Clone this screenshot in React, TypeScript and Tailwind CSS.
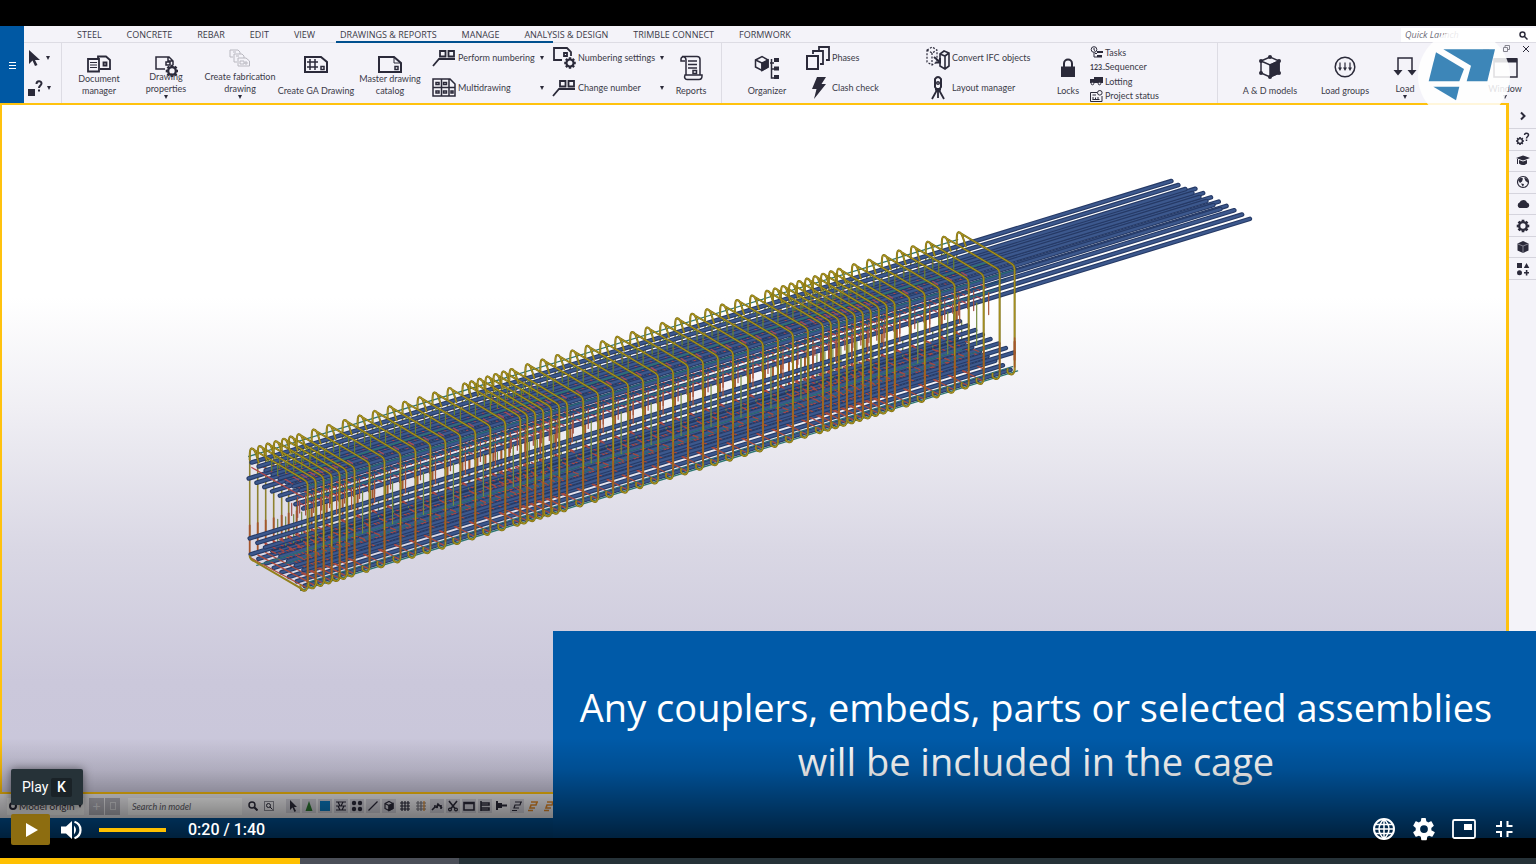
import type { ReactNode } from 'react'

const INK = '#2b2a3a'

interface IconProps {
  w?: number
  h?: number
  box?: string
  stroke?: number
  children: ReactNode
}

function Icon({ w = 24, h = 24, box, stroke = 1.5, children }: IconProps) {
  return (
    <svg
      width={w}
      height={h}
      viewBox={box ?? `0 0 ${w} ${h}`}
      fill="none"
      stroke={INK}
      strokeWidth={stroke}
      className="shrink-0"
      aria-hidden
    >
      {children}
    </svg>
  )
}

const gearTeeth = [0, 45, 90, 135, 180, 225, 270, 315]

function Gear({ x, y, r = 3, color = INK }: { x: number; y: number; r?: number; color?: string }) {
  return (
    <g transform={`translate(${x} ${y})`} stroke={color}>
      <circle r={r} strokeWidth={r * 0.6} fill="none" />
      {gearTeeth.map((a) => (
        <path key={a} d={`M0 ${-r * 1.1}V${-r * 1.65}`} strokeWidth={r * 0.7} transform={`rotate(${a})`} />
      ))}
    </g>
  )
}

/* ---------- ribbon icons ---------- */

const DocumentIcon = () => (
  <Icon w={24} h={18} stroke={1.8}>
    <path d="M11 4V1.500h8l4 3.500v9H13" />
    <path d="M1 4h11v12.500H1z" />
    <path d="M3 7.500h7M3 10h7M3 12.500h7" strokeWidth="1.200" />
    <path d="M16.500 7.500h3v3h-3z" />
  </Icon>
)
const DrawingPropsIcon = () => (
  <Icon w={24} h={22}>
    <path d="M11 14H2V2h13l4 4v4M14 2v4h5M12 7h4v3h-4z" />
    <Gear x={18} y={16} r={3.8} />
  </Icon>
)
const FabricationIcon = () => (
  <span className="-mt-1.5 block">
    <Icon w={22} h={18} stroke={1}>
      <g stroke="#b9b8c0">
        <path d="M4 8H1V1h8l2 2v2M4 3h3M8 13H5V5h8l2 2v2M7 7h3" />
        <path d="M9 9h8l3.500 3v5H9zM11 12h4v3h-4zM16 13h2v2h-2z" />
      </g>
    </Icon>
  </span>
)
const GaIcon = () => (
  <Icon w={26} h={19} stroke={2}>
    <path d="M2 2h16l6 5v10H2z" />
    <path d="M7 4v11M12 4v11M4 7h11M4 12h11" strokeWidth="1.500" />
    <path d="M18 11.500h3v3h-3z" strokeWidth="1.500" />
  </Icon>
)
const MasterIcon = () => (
  <Icon w={26} h={19} stroke={2}>
    <path d="M2 2h15l7 6v9H2z" />
    <path d="M17 2v6h7" strokeWidth="1" />
    <path d="M18 11.500h3v3h-3z" strokeWidth="1.500" />
  </Icon>
)
const NumberIcon = () => (
  <Icon>
    <path d="M1 20l6-7h16M8 5h5.500v5.500H8zM16.500 5H22v5.500h-5.500z" strokeWidth="1.800" />
  </Icon>
)
const MultiIcon = () => (
  <Icon>
    <path d="M1 3h17l5 5v12H1zM1 11.500h22M9.500 3v17M17 3v17" strokeWidth="1.500" />
    <path d="M4 6.500h3v2H4zM4 15h3v2H4zM11.500 6.500h3v2h-3zM11.500 15h3v2h-3zM19 15h2v2h-2z" />
  </Icon>
)
const NumberSettingsIcon = () => (
  <Icon>
    <path d="M10 14H2V2h13l4 4v4M12 7h3v3h-3z" strokeWidth="1.800" />
    <Gear x={18} y={17} r={3.5} />
  </Icon>
)
const ReportsIcon = () => (
  <Icon w={24} h={26}>
    <path d="M7 20V5c0-4-5-4-5-1v2h4M3 1.500h15c3 0 3 2 3 3V20" />
    <path d="M6 20h17v1c0 3-2 3.500-3 3.500H8c-2 0-3-2-2-4.500zM9 6h9M9 9.500h9M9 13h9" />
    <path d="M14 15.500h3.500v3H14z" />
  </Icon>
)
const OrganizerIcon = () => (
  <Icon w={26} h={26}>
    <path d="M1.500 5L8 1.500 14 5v7l-6 3.500L1.500 12z" />
    <path d="M8 8l6-3v7l-6 3.500z" fill={INK} />
    <path d="M1.500 5L8 8v7M16 8h4M17.500 4v19h3M17.500 14H21" />
    <path d="M20 3h5v4h-5zM20 11.500h5v4h-5zM20 20h5v4h-5z" fill={INK} stroke="none" />
  </Icon>
)
const PhasesIcon = () => (
  <Icon>
    <path d="M1 10h11v13H1z" strokeWidth="2" />
    <path d="M7 8V5h10v13h-3M13 4V1h10v13h-3" strokeWidth="1.800" />
  </Icon>
)
const ClashIcon = () => (
  <Icon>
    <path d="M11 1h9l-4.500 7H20L8 23l2.500-10H6z" fill={INK} stroke="none" />
  </Icon>
)
const ConvertIcon = () => (
  <Icon stroke={1.2}>
    <path d="M1 4l5-3 5 3v12l-5 3-5-3zM1 4l5 3 5-3M6 7v12" strokeDasharray="2 1.500" />
    <path d="M14 8l4-3 5 2v13l-4 3-5-3zM14 8l5 2 4-3M19 10v13" strokeWidth="1.600" />
    <path d="M8 11l6 5M14 12v4.500H9.500" strokeWidth="2" />
  </Icon>
)
const LayoutIcon = () => (
  <Icon>
    <path d="M9 3q3-4 6 0v8l-1.500 2h-3L9 11z" strokeWidth="2" />
    <circle cx="12" cy="7" r="1.300" />
    <path d="M9 13.500h6M11 14L6 23M13 14l5 9M12 14v8" strokeWidth="1.800" />
  </Icon>
)
const LockIcon = () => (
  <Icon w={16} h={22}>
    <path d="M4 12V8.500a4 4 0 018 0V12" strokeWidth="2" />
    <path d="M1 11.500h14V22H1z" fill={INK} stroke="none" />
  </Icon>
)
const TasksIcon = () => (
  <Icon w={13} h={12} stroke={1}>
    <circle cx="4" cy="3.500" r="2.800" />
    <path d="M4 2v2l1 .500M4 6.500V11h3M5 7.500h2" />
    <path d="M7 5h6v2H7zM7 9h5v2.500H7z" fill={INK} stroke="none" />
  </Icon>
)
const LottingIcon = () => (
  <Icon w={13} h={12} stroke={1}>
    <path d="M4 2h9v6H4zM0 4h4v4H0z" fill={INK} stroke="none" />
    <circle cx="2.500" cy="8.500" r="1.300" fill="#f4f3f9" />
    <circle cx="9.500" cy="8.500" r="1.300" fill="#f4f3f9" />
  </Icon>
)
const StatusIcon = () => (
  <Icon w={13} h={12} stroke={1}>
    <path d="M7 2.500H.5v9h11.500V6M2.500 5H6M2.500 9.500h7M3 7v2.500M5.500 7.500v2M8 7v2.500" />
    <circle cx="9.800" cy="2.800" r="2.300" />
  </Icon>
)
const ModelsIcon = () => (
  <Icon w={24} h={24}>
    <path d="M3 6l9-4 9 4v12l-9 4-9-4zM3 6l9 4 9-4" />
    <path d="M12 10l9-4v12l-9 4z" fill={INK} />
    <g fill={INK} stroke="none">
      <circle cx="3" cy="6" r="2" />
      <circle cx="12" cy="2" r="2" />
      <circle cx="21" cy="6" r="2" />
      <circle cx="3" cy="18" r="2" />
      <circle cx="21" cy="18" r="2" />
      <circle cx="12" cy="22" r="2" />
    </g>
  </Icon>
)
const LoadGroupsIcon = () => (
  <Icon w={22} h={24}>
    <circle cx="11" cy="12" r="9.800" />
    <path d="M6 7.500v6M11 7.500v6M16 7.500v6" strokeWidth="1.200" />
    <path d="M4 12.500h4l-2 3.500zM9 12.500h4L11 16zM14 12.500h4L16 16z" fill={INK} stroke="none" />
  </Icon>
)
const LoadIcon = () => (
  <Icon w={24} h={23}>
    <path d="M5 17V3h14v14" />
    <path d="M.5 15h9L5 20.500zM14.500 15h9L19 20.500z" fill={INK} stroke="none" />
  </Icon>
)
const WindowIcon = () => (
  <Icon w={25} h={24}>
    <path d="M1 4h23v18H1z" />
    <path d="M1 3h23v4.500H1z" fill={INK} stroke="none" />
  </Icon>
)

/* ---------- ribbon parts ---------- */

const Caret = () => <span className="h-0 w-0 border-x-2 border-t-4 border-x-transparent border-t-[#2b2a3a]" />

interface BigButtonProps {
  icon: ReactNode
  lines: string[]
  width: string
  caret?: boolean
}

function BigButton({ icon, lines, width, caret }: BigButtonProps) {
  return (
    <button
      type="button"
      className={`flex h-full shrink-0 flex-col items-center justify-between whitespace-nowrap pt-3 leading-3 ${width} ${caret ? 'pb-1' : 'pb-1.5'}`}
    >
      <span className="flex h-3 items-start">{icon}</span>
      <span className="flex flex-col items-center">
        {lines.map((line) => (
          <span key={line}>{line}</span>
        ))}
        {caret ? <Caret /> : null}
      </span>
    </button>
  )
}

function RowButton({ icon, label, caret }: { icon: ReactNode; label: string; caret?: boolean }) {
  return (
    <button type="button" className="flex h-[30px] w-full items-center gap-0.5 whitespace-nowrap pr-2 text-left">
      {icon}
      <span className="grow">{label}</span>
      {caret ? <Caret /> : null}
    </button>
  )
}

function SmallButton({ icon, label }: { icon: ReactNode; label: string }) {
  return (
    <button type="button" className="flex h-[15px] items-center gap-0.5 whitespace-nowrap text-left">
      {icon}
      {label}
    </button>
  )
}

const tabs = [
  'STEEL',
  'CONCRETE',
  'REBAR',
  'EDIT',
  'VIEW',
  'DRAWINGS & REPORTS',
  'MANAGE',
  'ANALYSIS & DESIGN',
  'TRIMBLE CONNECT',
  'FORMWORK',
]

function TabRow() {
  return (
    <nav className="flex h-[17px] items-end border-b border-[#dddce4] pl-[53px] font-['Open_Sans',sans-serif] text-[9px]">
      <div className="flex gap-[25px]">
        {tabs.map((tab) => (
          <button key={tab} type="button" className="relative h-[15px] whitespace-nowrap">
            {tab}
            {tab === 'DRAWINGS & REPORTS' ? (
              <span className="absolute -bottom-px -left-1 h-0.5 w-[217px] bg-[#00508f]" />
            ) : null}
          </button>
        ))}
      </div>
      <label className="ml-auto flex h-3.5 w-[135px] items-center bg-white pl-1 pr-2">
        <input
          type="text"
          aria-label="Quick Launch"
          placeholder="Quick Launch"
          className="w-full bg-transparent italic outline-none placeholder:text-[#6d6c78]"
        />
        <Icon w={9} h={9}>
          <circle cx="3.500" cy="3.500" r="2.500" />
          <path d="M5.500 5.500l3 3" />
        </Icon>
      </label>
    </nav>
  )
}

function Ribbon() {
  return (
    <header className="relative flex h-[77px] shrink-0 bg-[#f4f3f9] font-[Lato,sans-serif] text-[9px] text-[#3b3a48]">
      <button type="button" aria-label="Menu" className="flex w-6 shrink-0 items-center justify-center bg-[#0058a3]">
        <svg width="8" height="8" stroke="#fff" aria-hidden>
          <path d="M1 1.500h7M1 4.500h7M1 7.500h7" />
        </svg>
      </button>
      <div className="flex min-w-0 grow flex-col">
        <TabRow />
        <div className="flex h-[60px]">
          <div className="flex w-[38px] shrink-0 flex-col border-r border-[#dddce4]">
            <button type="button" aria-label="Select" className="flex h-[30px] items-center gap-1.5 pl-1">
              <Icon w={12} h={16}>
                <path d="M1 0v14l3.500-3.500L7 16l2.500-1-2.500-5h5z" fill={INK} stroke="none" />
              </Icon>
              <Caret />
            </button>
            <button type="button" aria-label="Inquire" className="flex h-[30px] items-center gap-1 pl-1">
              <Icon w={15} h={16}>
                <path d="M0 9h7v7H0z" fill={INK} stroke="none" />
                <path d="M8.500 4c0-3.500 5-3.500 5-.5 0 2-2.500 2-2.500 4.500M11 9.500v2" strokeWidth="2" />
              </Icon>
              <Caret />
            </button>
          </div>
          <BigButton icon={<DocumentIcon />} lines={['Document', 'manager']} width="w-[74px]" />
          <BigButton icon={<DrawingPropsIcon />} lines={['Drawing', 'properties']} width="w-[60px]" caret />
          <BigButton icon={<FabricationIcon />} lines={['Create fabrication', 'drawing']} width="w-[88px]" caret />
          <BigButton icon={<GaIcon />} lines={['Create GA Drawing']} width="w-[64px]" />
          <BigButton icon={<MasterIcon />} lines={['Master drawing', 'catalog']} width="w-[84px]" />
          <div className="w-[120px] shrink-0">
            <RowButton icon={<NumberIcon />} label="Perform numbering" caret />
            <RowButton icon={<MultiIcon />} label="Multidrawing" caret />
          </div>
          <div className="w-[120px] shrink-0">
            <RowButton icon={<NumberSettingsIcon />} label="Numbering settings" caret />
            <RowButton icon={<NumberIcon />} label="Change number" caret />
          </div>
          <BigButton icon={<ReportsIcon />} lines={['Reports']} width="w-[38px]" />
          <div className="ml-[11px] flex shrink-0 border-l border-[#dddce4] pl-1.5">
            <BigButton icon={<OrganizerIcon />} lines={['Organizer']} width="w-[78px]" />
          </div>
          <div className="w-[120px] shrink-0">
            <RowButton icon={<PhasesIcon />} label="Phases" />
            <RowButton icon={<ClashIcon />} label="Clash check" />
          </div>
          <div className="w-[120px] shrink-0">
            <RowButton icon={<ConvertIcon />} label="Convert IFC objects" />
            <RowButton icon={<LayoutIcon />} label="Layout manager" />
          </div>
          <BigButton icon={<LockIcon />} lines={['Locks']} width="w-[44px]" />
          <div className="flex w-[128px] shrink-0 flex-col border-r border-[#dddce4] pt-0.5">
            <SmallButton icon={<TasksIcon />} label="Tasks" />
            <SmallButton
              icon={<span className="w-[13px] text-[7px] font-bold">123..</span>}
              label="Sequencer"
            />
            <SmallButton icon={<LottingIcon />} label="Lotting" />
            <SmallButton icon={<StatusIcon />} label="Project status" />
          </div>
          <BigButton icon={<ModelsIcon />} lines={['A & D models']} width="w-[104px]" />
          <BigButton icon={<LoadGroupsIcon />} lines={['Load groups']} width="w-[46px]" />
          <BigButton icon={<LoadIcon />} lines={['Load']} width="w-[74px]" caret />
          <div className="ml-auto flex">
            <BigButton icon={<WindowIcon />} lines={['Window']} width="w-[62px]" caret />
          </div>
        </div>
      </div>
      <div className="absolute right-1.5 top-[19px] flex gap-3">
        <button type="button" aria-label="Minimize">
          <Icon w={8} h={8} stroke={1}>
            <path d="M1 4.500h6" />
          </Icon>
        </button>
        <button type="button" aria-label="Restore">
          <Icon w={8} h={8} stroke={1}>
            <path d="M1.500 2.500h4v4h-4zM3 2.500v-2h4.500v4H6" stroke="#85848e" />
          </Icon>
        </button>
        <button type="button" aria-label="Close">
          <Icon w={8} h={8} stroke={1}>
            <path d="M1 1l6 6M7 1L1 7" />
          </Icon>
        </button>
      </div>
    </header>
  )
}

/* ---------- side bar ---------- */

const sideTools: { label: string; icon: ReactNode }[] = [
  {
    label: 'Help on settings',
    icon: (
      <>
        <Gear x={4} y={9} r={2.4} />
        <path d="M8.500 3c0-2.500 4-2.500 4 0 0 1.500-2 1.500-2 3.500M10.500 7.500v1.500" strokeWidth="1.500" />
      </>
    ),
  },
  {
    label: 'Learning',
    icon: (
      <g fill={INK} stroke="none">
        <path d="M7 1.500L14 4 7 6.500 0 4zM3 6l4 1.500L11 6v3.500q-4 3-8 0zM1 5h1v5H1z" />
      </g>
    ),
  },
  {
    label: 'Online',
    icon: (
      <>
        <circle cx="7" cy="7" r="5.500" strokeWidth="1.200" />
        <path d="M2 5l3-2.500 2 1-1 3-2 1.500zM8 2.500l3.500 1.500 1 4-3-2zM5 8.500l3 .5-1 3z" fill={INK} stroke="none" />
      </>
    ),
  },
  {
    label: 'Cloud',
    icon: <path d="M3.500 11a3 3 0 010-5.500 4 4 0 017.500 0 2.800 2.800 0 010 5.500z" fill={INK} stroke="none" />,
  },
  { label: 'Settings', icon: <Gear x={7} y={7} r={3.8} /> },
  {
    label: 'Components',
    icon: (
      <>
        <path d="M1.500 3.500L7 1l5.500 2.500v7L7 13l-5.500-2.500z" fill={INK} stroke="none" />
        <path d="M2 4l5 2 5-2M7 6v7" stroke="#9a99a6" strokeWidth=".800" />
      </>
    ),
  },
  {
    label: 'Shapes',
    icon: (
      <g fill={INK} stroke="none">
        <path d="M1 1h5v5H1zM10.500 1l2.800 5H7.800zM9.800 8h1.600v2H13v1.600h-1.600v2H9.800v-2H8V10h1.800z" />
        <circle cx="3.500" cy="10.700" r="2.500" />
      </g>
    ),
  },
]

function SideBar() {
  return (
    <aside className="flex w-[27px] shrink-0 flex-col bg-[#f4f3f9]">
      <button type="button" aria-label="Collapse" className="flex h-[26px] items-center justify-center border-b border-[#d5d4dd]">
        <Icon w={8} h={10}>
          <path d="M2 1.500L5.500 5 2 8.500" strokeWidth="2" />
        </Icon>
      </button>
      <div className="grid h-[151px] auto-rows-fr">
        {sideTools.map((tool) => (
          <button
            key={tool.label}
            type="button"
            aria-label={tool.label}
            className="flex items-center justify-center border-b border-[#d5d4dd]"
          >
            <Icon w={14} h={14}>
              {tool.icon}
            </Icon>
          </button>
        ))}
      </div>
    </aside>
  )
}

/* ---------- rebar cage ---------- */

// stirrup positions along the beam, with the denser zones near start, third points
const stirrupX = [
  307, 315, 323, 331, 339, 346, 354, 369, 384, 400, 415, 430, 445, 460, 475, 490, 505, 520, 527, 535, 543, 551, 559,
  567, 583, 598, 613, 628, 643, 658, 673, 688, 703, 718, 733, 748, 763, 778, 793, 808, 823, 831, 839, 847, 855, 863,
  871, 879, 887, 895, 910, 925, 940, 955, 969, 984, 1000, 1015,
]
const SLOPE = 0.306
const stirrups = stirrupX.map((x) => ({ x, dy: -(x - 307) * SLOPE }))
const innerTies = stirrups.filter(({ x }) => x < 990)
const eight = [0, 1, 2, 3, 4, 5, 6, 7]

const STIRRUP =
  'M-49 463C-51 458 -52 449 -56 449C-58 449 -58 454 -58 460M-56 449L-4 480Q0 482 0 486V587Q-1 593 -5 591Q-8 590 -7 586'

function Bar({ x, y, length }: { x: number; y: number; length: number }) {
  const d = `M${x} ${y}l${length} ${-length * SLOPE}`
  return (
    <>
      <path d={d} stroke="#263a66" strokeWidth="4.600" />
      <path d={d} stroke="#3c588d" strokeWidth="2.400" />
    </>
  )
}

function Thin({ x, y, length, color }: { x: number; y: number; length: number; color: string }) {
  return <path d={`M${x} ${y}l${length} ${-length * SLOPE}`} stroke={color} strokeWidth="1.300" />
}

function Cage() {
  return (
    <svg
      viewBox="2 105 1504 688"
      className="block h-full w-full"
      fill="none"
      strokeLinecap="round"
      role="img"
      aria-label="Rebar cage model"
    >
      {/* far side legs */}
      {stirrups.map(({ x, dy }) => (
        <g key={x} transform={`translate(${x} ${dy})`}>
          <path d="M-58 460V540" stroke="#8f8230" strokeWidth="1.600" />
          <path d="M-58 526V556" stroke="#a5562c" strokeWidth="1.800" />
        </g>
      ))}
      {/* bottom mat */}
      {eight.map((i) => (
        <Bar key={i} x={250 + i * 7.7} y={555 + i * 4.5} length={707} />
      ))}
      {innerTies.map(({ x, dy }) => (
        <g key={x} transform={`translate(${x} ${dy})`} strokeWidth="1.200">
          <path d="M-58 558L-2 588" stroke="#b04a3a" />
          <path d="M-46 542L0 566" stroke="#b8423f" />
          <path d="M-30 520v24M-22 528v20" stroke="#6f8640" />
        </g>
      ))}
      {eight.map((i) => (
        <Bar key={i} x={249 + i * 7.7} y={539 + i * 4.5} length={711} />
      ))}
      <Thin x={256} y={566} length={706} color="#2e7076" />
      <Thin x={270} y={552} length={706} color="#20375f" />
      <Thin x={285} y={564} length={706} color="#2e6a76" />
      {/* marks of the inner ties on the bottom mat */}
      {innerTies.map(({ x, dy }) => (
        <g key={x} transform={`translate(${x} ${dy})`} strokeWidth="1.300" stroke="#a8483f">
          <path d="M-28 540l4 2M-18 549l4 2M-10 557l5 2M-36 552l4 2M-6 574l5 2" />
        </g>
      ))}
      {/* top mat */}
      {eight.map((i) => (
        <Bar key={i} x={248 + i * 7.8} y={479 + i * 4.3} length={948} />
      ))}
      {innerTies.map(({ x, dy }) => (
        <g key={x} transform={`translate(${x} ${dy})`} strokeWidth="1.200">
          <path d="M-56 468L-4 498" stroke="#b2474a" />
          <path d="M-10 498v20M-16 504v12" stroke="#a04f45" />
        </g>
      ))}
      {eight.map((i) => (
        <Bar key={i} x={251 + i * 7} y={463 + i * 4} length={921} />
      ))}
      <Thin x={248} y={457} length={710} color="#2c7570" />
      <Thin x={290} y={476} length={700} color="#2c7570" />
      <Thin x={306} y={487} length={709} color="#2a6f7a" />
      <Thin x={306} y={494} length={700} color="#1f4d70" />
      <Thin x={306} y={501} length={690} color="#2a6f7a" />
      {/* inner ties */}
      {innerTies.map(({ x, dy }, i) => (
        <g key={x} transform={`translate(${x} ${dy})`} strokeWidth="1.200">
          <path d="M-40 462q2-4 4 0v9M-30 464v12" stroke="#68802f" />
          <path d="M-3 492l5 3M-7 504l4 2M-22 480l5 3" stroke="#b04a52" />
          {i % 2 === 0 ? <path d="M8 506v42" stroke="#748a3c" /> : <path d="M5 500v22" stroke="#a8563a" />}
        </g>
      ))}
      <Thin x={300} y={591} length={718} color="#2c7570" />
      <Thin x={307} y={583} length={706} color="#2c6a7a" />
      {/* closed stirrups */}
      {stirrups.map(({ x, dy }) => (
        <g key={x} transform={`translate(${x} ${dy})`} strokeLinejoin="round">
          <path d={STIRRUP} stroke="#7c6d12" strokeWidth="2" />
          <path d={STIRRUP} stroke="#ab9520" strokeWidth="1" />
          <path d="M0 555V584" stroke="#a85a24" strokeWidth="1.400" />
        </g>
      ))}
      <path d="M249 557Q250 561 254 562L302 590" stroke="#93801c" strokeWidth="2" />
      <path d="M1015 342v18" stroke="#a5562c" strokeWidth="2" />
    </svg>
  )
}

/* ---------- status bar ---------- */

const statusTools: { label: string; on?: boolean; icon: ReactNode }[] = [
  { label: 'Select all', on: true, icon: <path d="M3 0v10l2.500-2.500L7.500 12l1.500-1-2-4h3z" fill={INK} stroke="none" /> },
  { label: 'Select cones', on: true, icon: <path d="M6 1l3.500 10h-7z" fill="#2d7a32" stroke="none" /> },
  { label: 'Select parts', on: true, icon: <path d="M1 1h10v10H1z" fill="#0b7cc4" stroke="none" /> },
  { label: 'Select surfaces', on: true, icon: <path d="M1 2h10M1 6h10M1 10h10M3 2l2 4M8 2L6 6M3 6l2 4M9 6l-2 4" /> },
  {
    label: 'Select points',
    on: true,
    icon: (
      <g fill={INK} stroke="none">
        <circle cx="3" cy="3" r="2.200" />
        <circle cx="9" cy="3" r="2.200" />
        <circle cx="3" cy="9" r="2.200" />
        <circle cx="9" cy="9" r="2.200" />
      </g>
    ),
  },
  { label: 'Select lines', on: true, icon: <path d="M1.500 10.500l9-9" /> },
  {
    label: 'Select solids',
    on: true,
    icon: (
      <>
        <path d="M2 3.500L6 1.500l4 2v5l-4 2-4-2zM2 3.500l4 2 4-2M6 5.500v5" />
        <path d="M6 5.500l4-2v5l-4 2z" fill={INK} />
      </>
    ),
  },
  { label: 'Select grids', icon: <path d="M3 1v10M6 1v10M9 1v10M1 3h10M1 6h10M1 9h10" /> },
  {
    label: 'Select grid lines',
    icon: (
      <>
        <path d="M3 1v10M1 3h10M1 6h10M1 9h10M6 1v10" stroke="#77767f" />
        <path d="M9 1v10" stroke="#e08a2c" />
      </>
    ),
  },
  {
    label: 'Select welds',
    on: true,
    icon: <path d="M1 10l3-3M3 6h2M5 8l2-4 4 4M7 4l-1 4M10 5v4" strokeWidth="1.600" />,
  },
  {
    label: 'Select cuts',
    on: true,
    icon: (
      <>
        <path d="M2 1l6 7.500M10 1L4 8.500" strokeWidth="1.600" />
        <circle cx="3" cy="9.500" r="1.400" />
        <circle cx="9" cy="9.500" r="1.400" />
      </>
    ),
  },
  { label: 'Select views', on: true, icon: <path d="M1 2.500h10v7.500H1zM1 3.500h10" strokeWidth="1.600" /> },
  { label: 'Select bolts', on: true, icon: <path d="M2 1v10M2 3h8v2H2M2 8h8v2H2" strokeWidth="1.600" /> },
  {
    label: 'Select single bolts',
    icon: <path d="M1 1h2v9H1zM3 3h4v5H3zM7 4.500h5v2H7z" fill={INK} stroke="none" />,
  },
  { label: 'Select rebar', on: true, icon: <path d="M4 2h7M10 2L9 5H4L3 8h5M1 10.500h5" /> },
  { label: 'Select rebar groups', icon: <path d="M4 2h7M10 2L9 5H4L3 8h5M1 10.500h5" stroke="#e08a2c" strokeWidth="1.600" /> },
  { label: 'Select rebar sets', icon: <path d="M4 2h7M10 2L9 5H4L3 8h5M1 10.500h5" stroke="#e08a2c" strokeWidth="1.600" /> },
]

function StatusBar() {
  return (
    <div className="flex h-6 shrink-0 items-center bg-[#f0eff3] pl-[7px] font-[Lato,sans-serif] text-[9px] text-[#3b3a48]">
      <label className="flex h-[17px] w-[77px] items-center gap-0.5 bg-white px-0.5">
        <span className="h-2 w-2 shrink-0 rounded-full border-2 border-[#2b2a3a]" />
        <select aria-label="Work plane" className="min-w-0 grow appearance-none text-[10px]">
          <option>Model origin</option>
        </select>
        <Caret />
      </label>
      <div className="ml-[5px] flex gap-px text-[14px] leading-4 text-white/60">
        <button type="button" aria-label="Add work plane" className="h-[17px] w-[15px] bg-[#b5b4bd]">
          +
        </button>
        <button type="button" aria-label="Delete work plane" className="flex h-[17px] w-[15px] items-center justify-center bg-[#b5b4bd]">
          <span className="h-2 w-1.5 border border-white/50" />
        </button>
      </div>
      <input
        type="text"
        aria-label="Search in model"
        placeholder="Search in model"
        className="ml-2 h-[17px] w-[114px] bg-white pl-1 italic outline-none placeholder:text-[#5d5c66]"
      />
      <button type="button" aria-label="Search" className="ml-1.5">
        <Icon w={10} h={10}>
          <circle cx="4" cy="4" r="3" />
          <path d="M6.500 6.500L9.500 9.500" strokeWidth="2" />
        </Icon>
      </button>
      <button type="button" aria-label="Search in selection" className="ml-1.5">
        <Icon w={10} h={10} stroke={1}>
          <path d="M.5.500h9v9h-9z" strokeDasharray="1 1" />
          <circle cx="4.500" cy="4.500" r="2" />
          <path d="M6 6l2.500 2.500" />
        </Icon>
      </button>
      <div className="ml-3 flex gap-0.5">
        {statusTools.map((tool) => (
          <button
            key={tool.label}
            type="button"
            aria-label={tool.label}
            className={`flex h-3.5 w-3.5 items-center justify-center ${tool.on ? 'bg-[#d4d3dc]' : ''}`}
          >
            <Icon w={12} h={12} stroke={1.2}>
              {tool.icon}
            </Icon>
          </button>
        ))}
      </div>
    </div>
  )
}

/* ---------- video overlays ---------- */

function Watermark() {
  return (
    <svg viewBox="0 0 276 276" className="absolute right-[26px] top-1 w-[92px]" aria-hidden>
      <circle cx="138" cy="138" r="138" fill="#fff" opacity=".850" />
      <g fill="#3d86b8">
        <path d="M54 67l84 50-14 37H32z" />
        <path d="M76 58h155l-23 96h-62l13-47z" />
        <path d="M46 170h78l-10 41z" />
      </g>
    </svg>
  )
}

function Caption() {
  return (
    <div className="absolute bottom-0 right-0 h-[207px] w-[64%] bg-[#005aa8] pr-[17px] pt-[49px] text-center font-['Open_Sans',sans-serif] text-[38px] leading-[54px] text-white">
      <p className="whitespace-nowrap">Any couplers, embeds, parts or selected assemblies</p>
      <p>will be included in the cage</p>
    </div>
  )
}

const player = { position: 19.53, buffered: 29.88 }

function PlayerControls() {
  return (
    <div className="absolute inset-x-0 bottom-0 flex h-[126px] flex-col justify-end bg-[linear-gradient(to_bottom,rgba(0,0,0,0)_0%,rgba(0,0,0,0.13)_25%,rgba(0,0,0,0.36)_50%,rgba(0,0,0,0.62)_78%,rgba(0,0,0,0.75)_100%)] font-['Roboto',sans-serif] text-white">
      <div className="flex h-[31px] items-center pl-[11px] pr-5">
        <div className="relative">
          <button type="button" aria-label="Play" className="flex h-[31px] w-[39px] items-center justify-center rounded-xs bg-[#8d6d10] pl-0.5">
            <svg width="14" height="16" fill="#fff" aria-hidden>
              <path d="M1 1l12 7-12 7z" />
            </svg>
          </button>
          <div
            role="tooltip"
            className="absolute bottom-10 left-0 flex h-9 w-[72px] items-center justify-between rounded-xs bg-[#263238] px-[11px] text-[14px] shadow-[0_0_10px_rgba(0,0,0,0.5)]"
          >
            Play
            <kbd className="flex h-[19px] w-[21px] items-center justify-center rounded-xs bg-[#1a2227] font-['Roboto',sans-serif] text-[14px] font-medium">
              K
            </kbd>
          </div>
        </div>
        <button type="button" aria-label="Mute" className="ml-[11px]">
          <svg width="21" height="20" viewBox="0 0 21 20" fill="#fff" aria-hidden>
            <path d="M0 6.500h5L11 1v18l-6-5.500H0z" />
            <path d="M13 5.500q4 4.500 0 9z" />
            <path d="M13.500 1.800q6 2 6 8.200t-6 8.200" fill="none" stroke="#fff" strokeWidth="2.200" />
          </svg>
        </button>
        <input
          type="range"
          aria-label="Volume"
          defaultValue={100}
          className="ml-[17px] h-1 w-[67px] appearance-none bg-[#ffc000] [&::-webkit-slider-thumb]:appearance-none"
        />
        <span className="ml-[22px] text-[16px] font-medium">0:20 / 1:40</span>
        <div className="ml-auto flex gap-4">
          <button type="button" aria-label="Language">
            <svg width="24" height="24" fill="none" stroke="#fff" strokeWidth="2" aria-hidden>
              <circle cx="12" cy="11" r="10" />
              <path d="M2 11h20M12 1v20M3.500 6.500h17M3.500 15.500h17M12 1q-10 10 0 20M12 1q10 10 0 20" strokeWidth="1.500" />
            </svg>
          </button>
          <button type="button" aria-label="Settings">
            <svg width="24" height="24" viewBox="-1 0 26 26" fill="#fff" aria-hidden>
              <path d="M19.900 13.200c.1-.4.100-.8.100-1.200s0-.8-.1-1.200l2.500-2c.2-.2.300-.5.200-.7l-2.400-4.200c-.1-.3-.5-.4-.7-.3l-3 1.200c-.6-.5-1.300-.9-2-1.200l-.5-3.100c0-.3-.3-.5-.6-.5H9.600c-.3 0-.5.200-.6.500l-.4 3.100c-.8.300-1.400.7-2.100 1.200l-3-1.200c-.3-.1-.6 0-.7.300L.4 8.100c-.1.300-.1.500.2.700l2.500 2c-.1.400-.1.800-.1 1.200s0 .8.100 1.200l-2.500 2c-.3.200-.3.500-.2.700l2.400 4.200c.1.300.4.400.7.300l3-1.200c.7.500 1.300.9 2.100 1.200l.4 3.100c.1.300.3.500.6.500h4.800c.3 0 .6-.2.600-.5l.5-3.100c.7-.3 1.400-.7 2-1.200l3 1.200c.2.100.6 0 .7-.3l2.400-4.200c.1-.3.100-.5-.2-.7zM12 16.200a4.200 4.200 0 110-8.400 4.200 4.200 0 010 8.400z" />
            </svg>
          </button>
          <button type="button" aria-label="Picture in picture">
            <svg width="24" height="24" fill="none" stroke="#fff" strokeWidth="1.800" aria-hidden>
              <rect x="1" y="2" width="22" height="18" rx="1.500" />
              <path d="M12 6h8v6h-8z" fill="#fff" stroke="none" />
            </svg>
          </button>
          <button type="button" aria-label="Exit full screen">
            <svg width="24" height="24" fill="none" stroke="#fff" strokeWidth="2" aria-hidden>
              <path d="M4 8h5V3M20.500 8h-5V3M4 14h5v5M20.500 14h-5v5" />
            </svg>
          </button>
        </div>
      </div>
      <div className="relative mt-[13px] h-1.5 bg-[#263238]">
        <div className="absolute inset-y-0 left-0 bg-[#4b4f58]" style={{ width: `${player.buffered}%` }} />
        <div className="absolute inset-y-0 left-0 bg-[#ffc000]" style={{ width: `${player.position}%` }} />
        <input
          type="range"
          aria-label="Seek"
          defaultValue={player.position}
          className="absolute inset-0 h-full w-full opacity-0"
        />
      </div>
    </div>
  )
}

export default function App() {
  return (
    <main className="relative flex h-screen flex-col overflow-hidden bg-black py-[26px]">
      <section className="relative flex min-h-0 grow flex-col bg-[#f4f3f9]">
        <Ribbon />
        <div className="flex min-h-0 grow">
          <div className="min-w-0 grow border-2 border-r-[3px] border-[#ffc20e] bg-[linear-gradient(to_bottom,#fff_28%,#f0eff4_44%,#d9d7e4_65%,#cbc8db_84%,#c9c6da_100%)]">
            <Cage />
          </div>
          <SideBar />
        </div>
        <StatusBar />
        <div className="h-5 shrink-0 bg-[#0058a3]" />
        <Watermark />
        <Caption />
      </section>
      <PlayerControls />
    </main>
  )
}
